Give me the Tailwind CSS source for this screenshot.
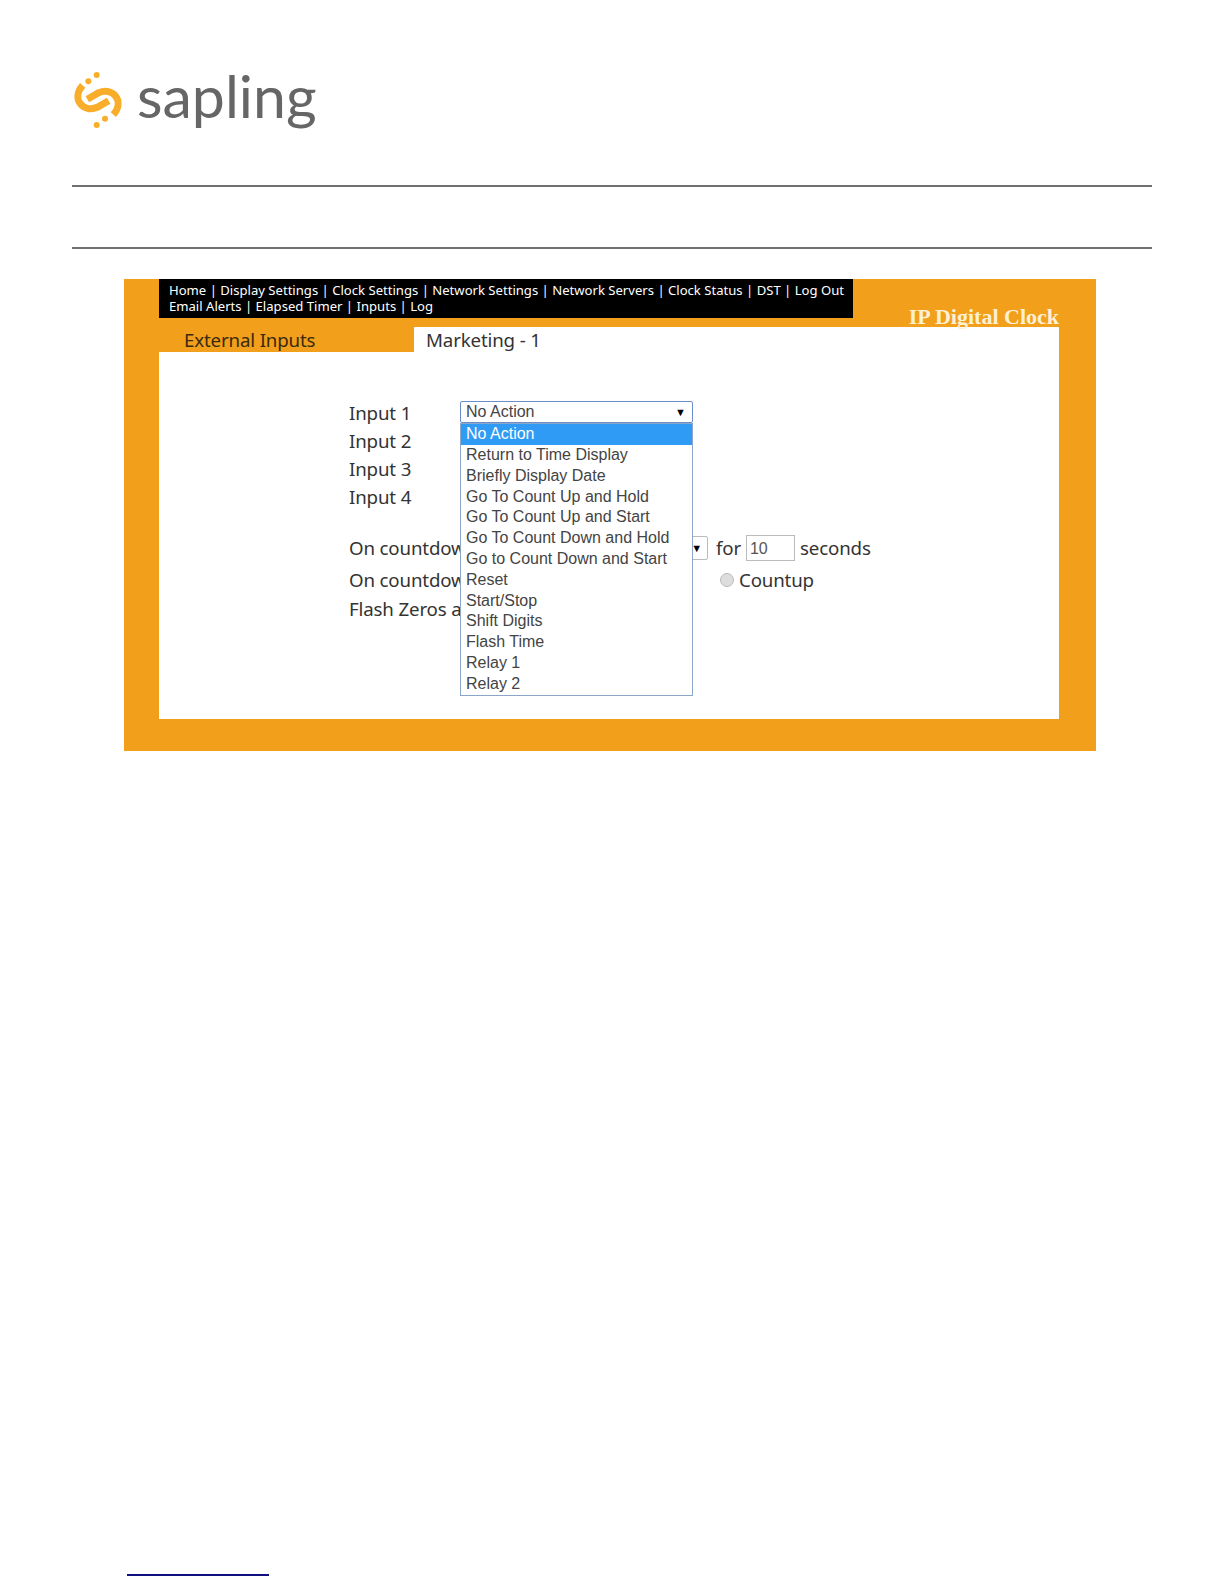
<!DOCTYPE html>
<html lang="en">
<head>
    <meta charset="UTF-8">
    <meta name="viewport" content="width=device-width, initial-scale=1.0">
    <title>External Inputs</title>
    <script src="https://cdn.jsdelivr.net/npm/@tailwindcss/browser@4"></script>
</head>
<body class="bg-white">
    <div class="w-[1224px] h-[1584px] overflow-hidden font-['Noto_Sans',sans-serif]">
        <!-- Logo -->
        <div class="h-[185px] pl-[66px] pt-[66px] flex items-start gap-[7px]">
            <svg class="w-[64px] h-[68px]" viewBox="0 0 192 204" fill="none">
                <path d="M64 100 L98 80 C140 62 178 105 142 146" stroke="#f9ae2b" stroke-width="21"/>
                <path d="M128 104 L94 124 C52 142 14 99 50 58" stroke="#f9ae2b" stroke-width="21"/>
                <circle cx="67" cy="46" r="9" fill="#f9ae2b"/>
                <circle cx="92" cy="27" r="9" fill="#f9ae2b"/>
                <circle cx="117" cy="158" r="9" fill="#f9ae2b"/>
                <circle cx="92" cy="177" r="9" fill="#f9ae2b"/>
            </svg>
            <span class="font-['Lato',sans-serif] text-[59px] leading-[59px] text-[#666]">sapling</span>
        </div>

        <div class="mx-[72px] h-[64px] border-y-2 border-[#707070]"></div>

        <!-- Clock page -->
        <div class="ml-[124px] mt-[30px] w-[972px] h-[472px] bg-[#f29f1b] pl-[35px]">
            <div class="w-[694px] h-[39px] bg-black text-white text-[13.1px] leading-[16px] pt-[3px] pl-[10px] whitespace-nowrap">
                <div>Home | Display Settings | Clock Settings | Network Settings | Network Servers | Clock Status | DST | Log Out</div>
                <div>Email Alerts | Elapsed Timer | Inputs | Log</div>
            </div>
            <div class="relative w-[900px] mt-[9px] flex h-[25px] text-[18.7px] leading-[25px] tracking-[-0.15px]">
                <div class="w-[255px] pl-[25px] text-[#3a2a10]">External Inputs</div>
                <div class="flex-1 bg-white pl-[12px] text-[#333]">Marketing - 1</div>
                <div class="absolute right-0 bottom-[23px] font-['Liberation_Serif',serif] font-bold text-[22px] leading-[24px] tracking-normal text-[#fdf0d4]">IP Digital Clock</div>
            </div>
            <div class="relative w-[900px] h-[367px] bg-white pl-[190px] pt-[47px] text-[18.7px] tracking-[-0.15px] text-[#333]">
                <div class="h-[28px] leading-[28px]">Input 1</div>
                <div class="h-[28px] leading-[28px]">Input 2</div>
                <div class="h-[28px] leading-[28px]">Input 3</div>
                <div class="h-[28px] leading-[28px]">Input 4</div>
                <div class="mt-[21px] h-[32px] leading-[32px] flex items-center whitespace-nowrap">
                    <span class="w-[111px] mr-[100px] overflow-hidden">On countdown</span>
                    <span class="relative w-[148px] h-[24px] border border-[#bbb] rounded-[2px]">
                        <span class="absolute right-[5px] top-0 text-[11px] leading-[22px] text-black">▼</span>
                    </span>
                    <span class="ml-[8px] w-[30px]">for</span>
                    <span class="w-[49px] h-[26px] border border-[#bbb] text-[16px] leading-[26px] pl-[3px] font-['Liberation_Sans',sans-serif] text-[#555]">10</span>
                    <span class="ml-[5px]">seconds</span>
                </div>
                <div class="h-[31px] leading-[31px] flex items-center whitespace-nowrap">
                    <span class="w-[111px] mr-[260px] overflow-hidden">On countdown</span>
                    <span class="w-[14px] h-[14px] rounded-full bg-[#ddd] border border-[#bbb]"></span>
                    <span class="ml-[5px]">Countup</span>
                </div>
                <div class="w-[111px] h-[28px] leading-[28px] overflow-hidden whitespace-nowrap">Flash Zeros at</div>

                <!-- Open dropdown -->
                <div class="absolute left-[301px] top-[49px] w-[233px] font-['Liberation_Sans',sans-serif] text-[16px] tracking-normal text-[#444]">
                    <div class="relative h-[22px] border border-[#6a8fc8] rounded-[2px] bg-white leading-[20px] pl-[5px]">
                        No Action
                        <span class="absolute right-[6px] top-0 text-[11px] text-black">▼</span>
                    </div>
                    <div class="border border-[#8aa6c8] bg-white leading-[20.8px]">
                        <div class="h-[21px] pl-[5px] bg-[#2f9bf5] text-white">No Action</div>
                        <div class="h-[20.8px] pl-[5px]">Return to Time Display</div>
                        <div class="h-[20.8px] pl-[5px]">Briefly Display Date</div>
                        <div class="h-[20.8px] pl-[5px]">Go To Count Up and Hold</div>
                        <div class="h-[20.8px] pl-[5px]">Go To Count Up and Start</div>
                        <div class="h-[20.8px] pl-[5px]">Go To Count Down and Hold</div>
                        <div class="h-[20.8px] pl-[5px]">Go to Count Down and Start</div>
                        <div class="h-[20.8px] pl-[5px]">Reset</div>
                        <div class="h-[20.8px] pl-[5px]">Start/Stop</div>
                        <div class="h-[20.8px] pl-[5px]">Shift Digits</div>
                        <div class="h-[20.8px] pl-[5px]">Flash Time</div>
                        <div class="h-[20.8px] pl-[5px]">Relay 1</div>
                        <div class="h-[20.8px] pl-[5px]">Relay 2</div>
                    </div>
                </div>
            </div>
        </div>

        <div class="ml-[127px] mt-[823px] w-[142px] h-[2px] bg-[#101080]"></div>
    </div>
</body>
</html>
